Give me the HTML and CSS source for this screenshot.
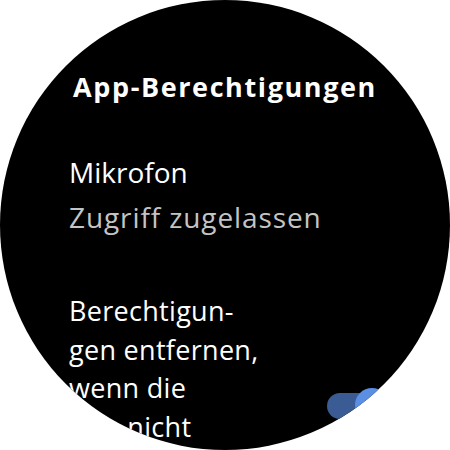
FILE: index.html
```html
<!DOCTYPE html>
<html lang="de">
<head>
<meta charset="utf-8">
<link rel="stylesheet" href="styles.css">
</head>
<body>
<div class="watch">
  <h1 class="title">App-Berechtigungen</h1>
  <div class="item">
    <div class="item-label">Mikrofon</div>
    <div class="item-value">Zugriff zugelassen</div>
  </div>
  <div class="setting">
    <p class="setting-text">Berechtigun-<br>gen entfernen,<br>wenn die<br>App nicht</p>
    <span class="toggle"><span class="thumb"></span></span>
  </div>
</div>
</body>
</html>
```
FILE: styles.css
```css
html, body {
  margin: 0;
  padding: 0;
  background: #ffffff;
}
.watch {
  width: 450px;
  height: 450px;
  border-radius: 50%;
  background: #000;
  overflow: hidden;
  position: relative;
  font-family: "Open Sans", Roboto, sans-serif;
  color: #fff;
  box-sizing: border-box;
  padding-top: 71px;
}
.title {
  margin: 0;
  font-size: 27px;
  font-weight: 700;
  text-align: center;
  line-height: 32px;
  letter-spacing: 1.6px;
}
.item {
  padding-left: 69px;
  margin-top: 47px;
}
.item-label {
  font-size: 28px;
  line-height: 45px;
}
.item-value {
  font-size: 28px;
  line-height: 45px;
  color: #c4c4c4;
  letter-spacing: 0.9px;
}
.setting {
  padding-left: 69px;
  margin-top: 52px;
  position: relative;
}
.setting-text {
  margin: 0;
  font-size: 27px;
  line-height: 38.5px;
  letter-spacing: 0.3px;
}
.toggle {
  position: absolute;
  left: 327px;
  top: 101px;
  width: 58px;
  height: 26px;
  border-radius: 13px;
  background: #3b5b94;
}
.thumb {
  position: absolute;
  left: 28px;
  top: -5px;
  width: 34px;
  height: 34px;
  border-radius: 50%;
  background: #5a8fe4;
}
```
